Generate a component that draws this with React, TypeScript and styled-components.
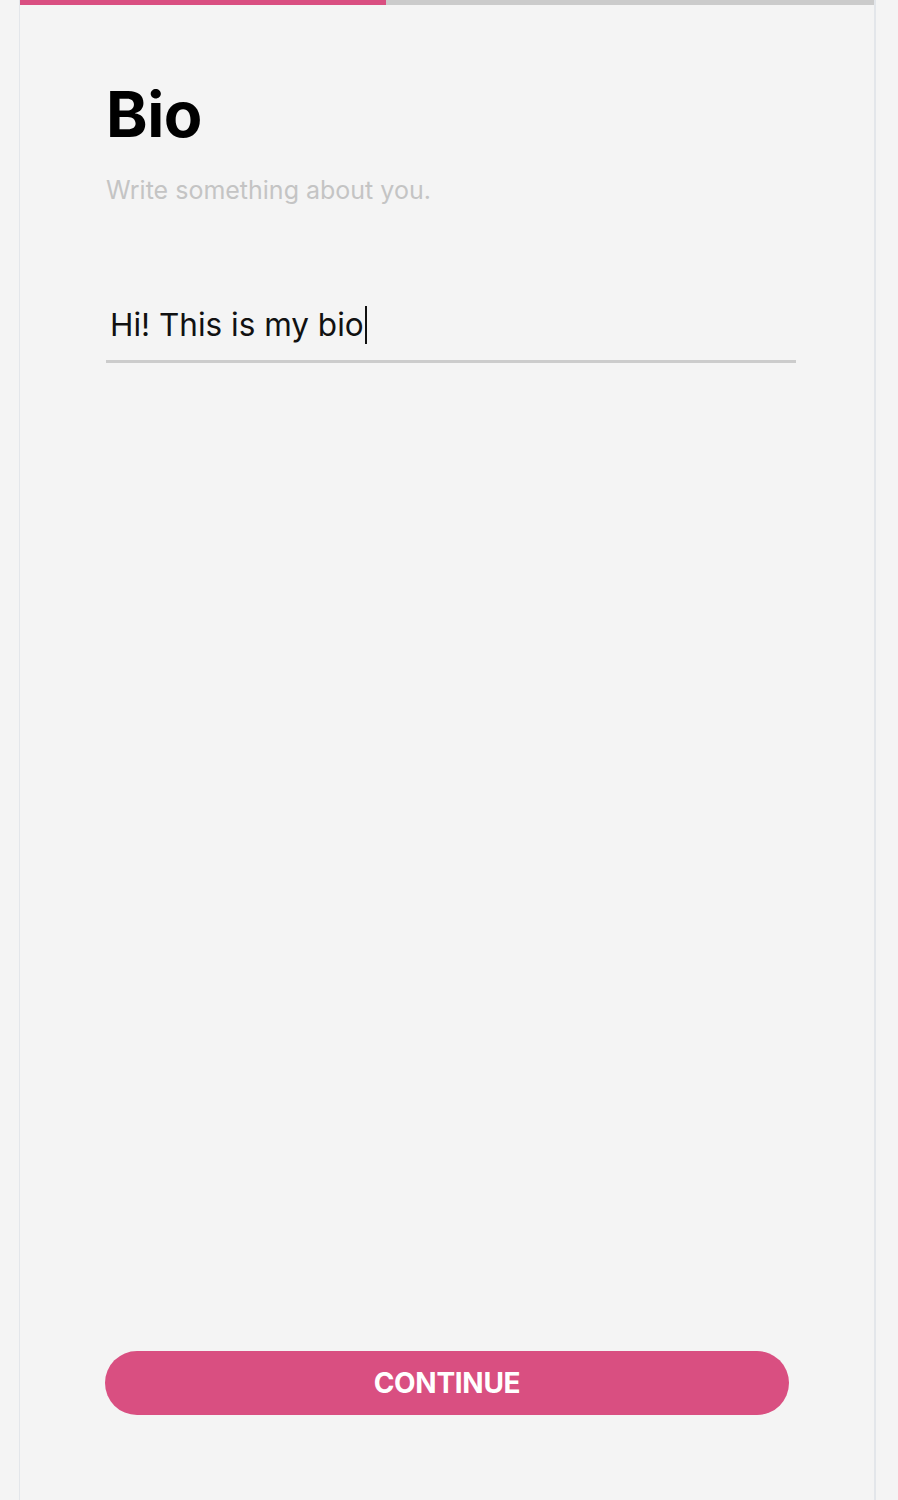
import React from "react";
import styled, { createGlobalStyle } from "styled-components";

const Global = createGlobalStyle`
  html, body { margin: 0; padding: 0; background: #f4f4f4; }
  body { font-family: Inter, "Noto Sans", sans-serif; }
  * { box-sizing: border-box; }
`;

const Frame = styled.div`
  margin-left: 19px;
  width: 857px;
  min-height: 1500px;
  border-left: 1px solid #e3e6ea;
  border-right: 2px solid #e3e6ea;
  background: #f4f4f4;
  display: flex;
  flex-direction: column;
`;

const Progress = styled.div`
  height: 5px;
  background: #cbcbcb;
  display: flex;
`;

const ProgressFill = styled.div`
  height: 100%;
  background: #d94f81;
`;

const Body = styled.div`
  flex: 1;
  display: flex;
  flex-direction: column;
  padding: 69px 0 85px 86px;
`;

const Title = styled.h1`
  margin: 0;
  font-size: 63px;
  line-height: 80px;
  font-weight: 700;
  color: #000;
  letter-spacing: -0.5px;
`;

const Subtitle = styled.p`
  margin: 21px 0 0 0;
  font-size: 25px;
  line-height: 30px;
  color: #c4c4c4;
`;

const Field = styled.div`
  margin-top: 100px;
  width: 690px;
  padding: 0 4px 15px 4px;
  border-bottom: 3px solid #cccccc;
  font-size: 31.5px;
  line-height: 40px;
  color: #111;
  display: flex;
  align-items: center;
`;

const Caret = styled.span`
  display: inline-block;
  width: 2px;
  height: 38px;
  background: #111;
  margin-left: 1px;
`;

const Button = styled.button`
  margin-top: auto;
  width: 684px;
  height: 64px;
  border: none;
  border-radius: 32px;
  background: #d94f81;
  color: #fff;
  font-family: Inter, "Noto Sans", sans-serif;
  font-weight: 700;
  font-size: 28px;
  letter-spacing: -0.3px;
  margin-left: -1px;
  cursor: pointer;
`;

export default function App() {
  return (
    <>
      <Global />
      <Frame>
        <Progress>
          <ProgressFill style={{ width: "42.9%" }} />
        </Progress>
        <Body>
          <Title>Bio</Title>
          <Subtitle>Write something about you.</Subtitle>
          <Field>
            Hi! This is my bio
            <Caret />
          </Field>
          <Button>CONTINUE</Button>
        </Body>
      </Frame>
    </>
  );
}
